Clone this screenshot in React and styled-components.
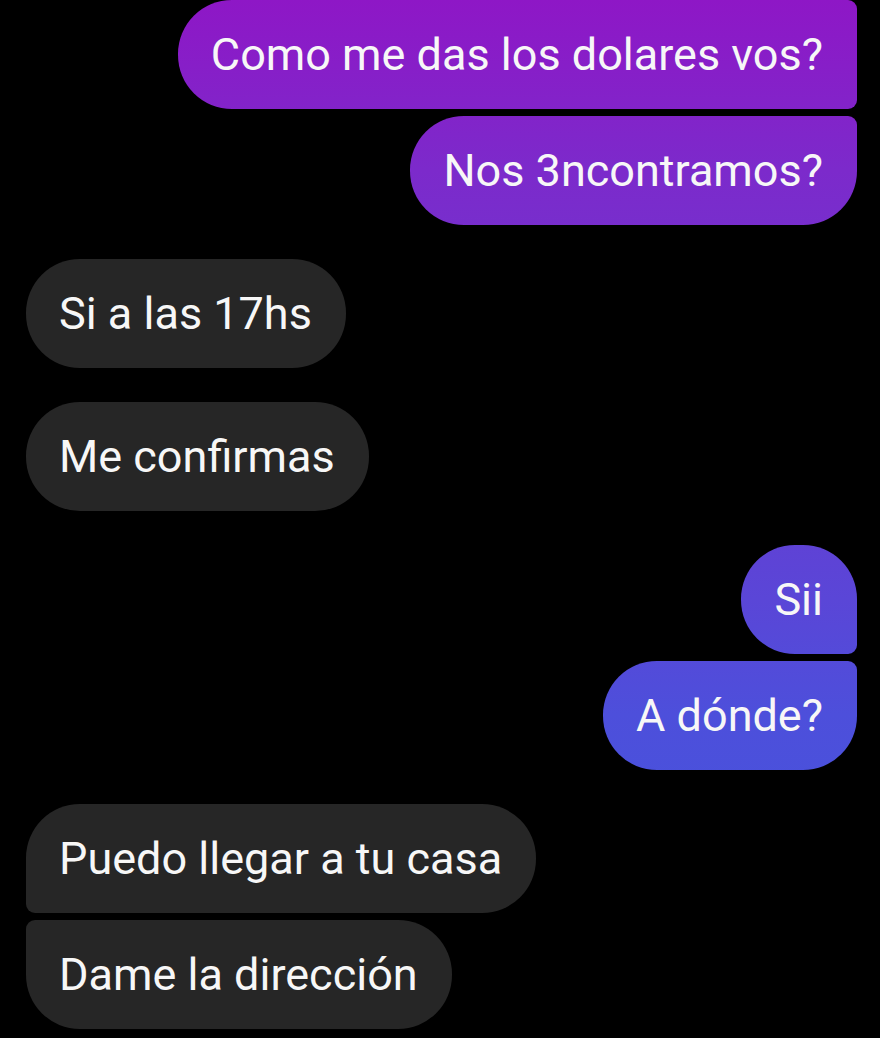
import React from "react";
import styled, { createGlobalStyle, css } from "styled-components";

const GlobalStyle = createGlobalStyle`
  html, body {
    margin: 0;
    padding: 0;
    background: #000;
  }
  body {
    font-family: Roboto, "Noto Sans", "Liberation Sans", sans-serif;
    -webkit-font-smoothing: antialiased;
  }
`;

const Thread = styled.div`
  width: 880px;
  height: 1038px;
  overflow: hidden;
  box-sizing: border-box;
  padding: 0 23px 0 26px;
  background: #000;
  display: flex;
  flex-direction: column;
  gap: 34.5px;
`;

const Group = styled.div`
  display: flex;
  flex-direction: column;
  align-items: ${(p) => (p.$mine ? "flex-end" : "flex-start")};
  gap: 7.5px;
`;

const BIG = "54px";
const SMALL = "9px";

const Bubble = styled.div`
  box-sizing: border-box;
  height: 108.5px;
  display: flex;
  align-items: center;
  padding: 0 34px 0 33px;
  font-size: 45px;
  line-height: 1;
  color: #f7f7f7;
  white-space: nowrap;
  ${(p) =>
    p.$mine
      ? css`
          background: linear-gradient(
            180deg,
            #8e17c6 0px,
            #7c2acb 170px,
            #5a46d7 600px,
            #4d4fdb 714px,
            #3f58de 1038px
          );
          background-attachment: fixed;
        `
      : css`
          background: #262626;
        `}
  border-radius: ${(p) =>
    [p.$tl ? SMALL : BIG, p.$tr ? SMALL : BIG, p.$br ? SMALL : BIG, p.$bl ? SMALL : BIG].join(" ")};
`;

const groups = [
  {
    mine: true,
    msgs: ["Como me das los dolares vos?", "Nos 3ncontramos?"],
  },
  { mine: false, msgs: ["Si a las 17hs"] },
  { mine: false, msgs: ["Me confirmas"] },
  { mine: true, msgs: ["Sii", "A dónde?"] },
  { mine: false, msgs: ["Puedo llegar a tu casa", "Dame la dirección"] },
];

export default function App() {
  return (
    <>
      <GlobalStyle />
      <Thread>
        {groups.map((g, gi) => (
          <Group key={gi} $mine={g.mine}>
            {g.msgs.map((m, i) => {
              const first = i === 0;
              const last = i === g.msgs.length - 1;
              const single = g.msgs.length === 1;
              const cornerProps = single
                ? {}
                : g.mine
                ? { $tr: !first || gi === 0, $br: !last }
                : { $tl: !first, $bl: !last };
              return (
                <Bubble key={i} $mine={g.mine} {...cornerProps}>
                  {m}
                </Bubble>
              );
            })}
          </Group>
        ))}
      </Thread>
    </>
  );
}
